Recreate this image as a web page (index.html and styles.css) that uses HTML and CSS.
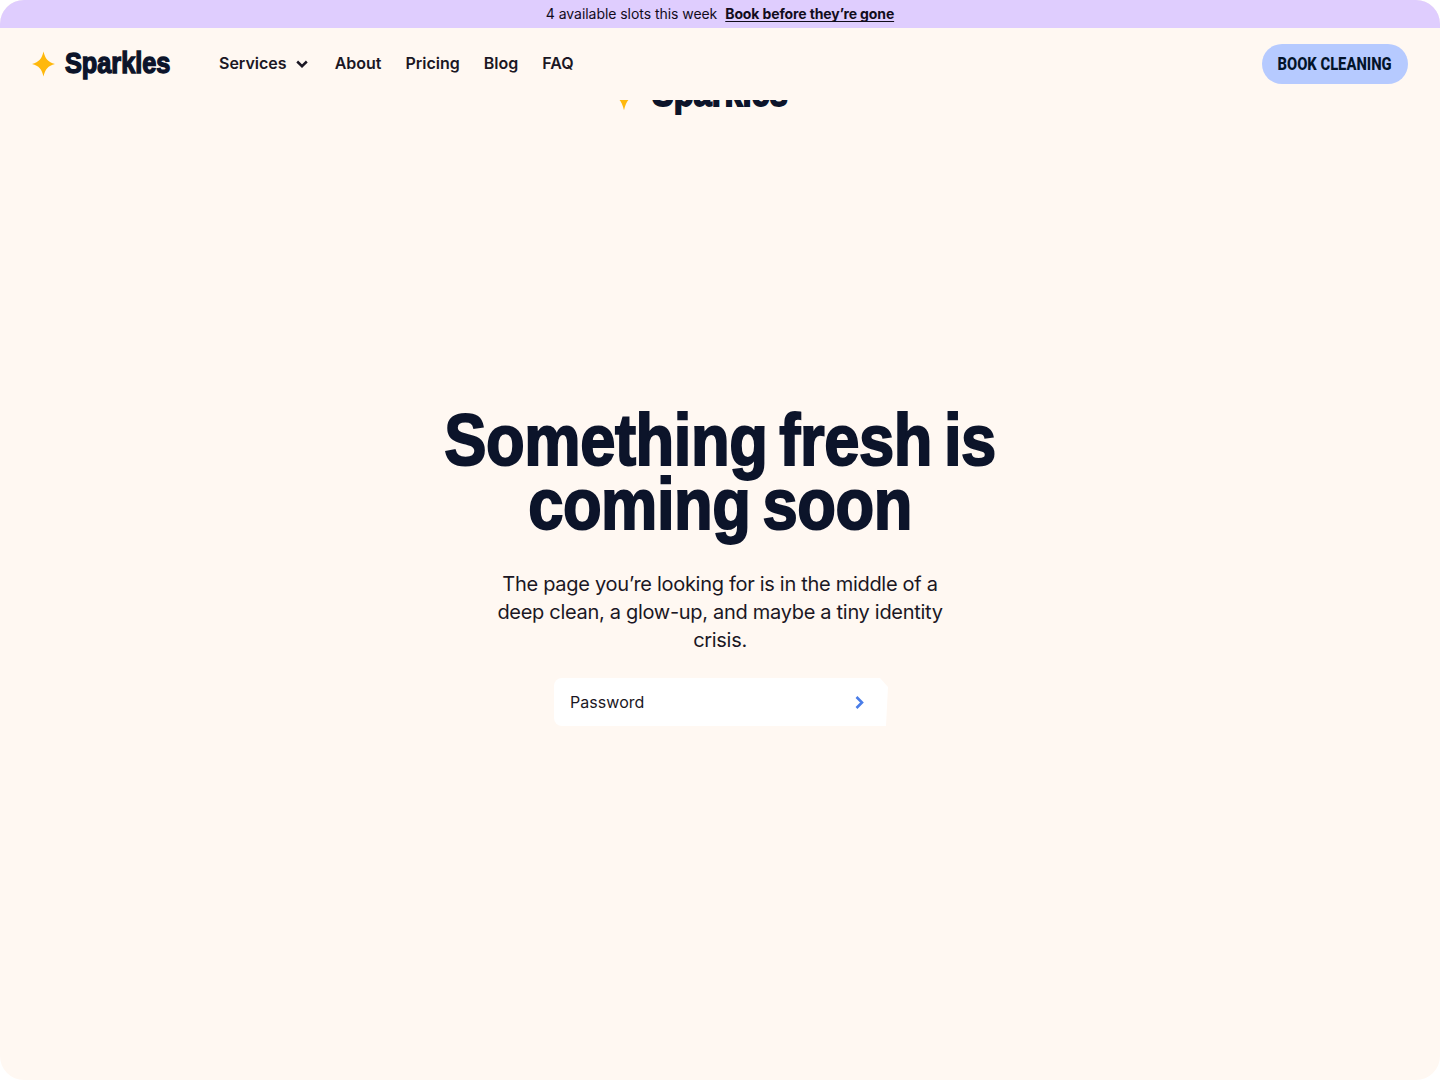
FILE: index.html
```html
<!DOCTYPE html>
<html lang="en">
<head>
    <meta charset="UTF-8">
    <meta name="viewport" content="width=device-width, initial-scale=1.0">
    <title>Sparkles</title>

    <link rel="stylesheet" href="styles.css">
</head>
<body>

    <div class="page">
        <header class="header">
            <div class="banner">
                <span class="banner__text">4 available slots this week</span>
                <a class="banner__link" href="#">Book before they’re gone</a>
            </div>

            <div class="navbar">
                <a class="logo" href="#">
                    <svg class="logo__star" viewBox="0 0 24 26" aria-hidden="true">
                        <path d="M12 0C13.8 7.6 16.6 11 24 13C16.6 15 13.8 18.4 12 26C10.2 18.4 7.4 15 0 13C7.4 11 10.2 7.6 12 0Z" />
                    </svg>
                    <span class="logo__name">Sparkles</span>
                </a>

                <nav class="nav">
                    <a class="nav__services" href="#">
                        <span>Services</span>
                        <svg class="nav__chevron" viewBox="0 0 12 8" aria-hidden="true">
                            <path d="M1.2 1.5L6 6.2L10.8 1.5" />
                        </svg>
                    </a>
                    <a href="#">About</a>
                    <a href="#">Pricing</a>
                    <a href="#">Blog</a>
                    <a href="#">FAQ</a>
                </nav>

                <a class="button" href="#"><span class="button__label">BOOK CLEANING</span></a>
            </div>
        </header>

        <main class="main">
            <div class="logo logo--large">
                <svg class="logo__star" viewBox="0 0 24 26" aria-hidden="true">
                    <path d="M12 0C13.8 7.6 16.6 11 24 13C16.6 15 13.8 18.4 12 26C10.2 18.4 7.4 15 0 13C7.4 11 10.2 7.6 12 0Z" />
                </svg>
                <span class="logo__name">Sparkles</span>
            </div>

            <section class="soon">
                <h1 class="soon__title">Something fresh is<br>coming soon</h1>
                <p class="soon__text">
                    The page you’re looking for is in the middle of a<br>
                    deep clean, a glow-up, and maybe a tiny identity<br>
                    crisis.
                </p>
                <form class="password">
                    <input class="password__input" type="password" placeholder="Password" aria-label="Password">
                    <button class="password__submit" type="button" aria-label="Submit">
                        <svg viewBox="0 0 9 13" aria-hidden="true">
                            <path d="M1.5 1L7 6.5L1.5 12" />
                        </svg>
                    </button>
                </form>
            </section>
        </main>
    </div>

</body>
</html>
```

FILE: styles.css
```css
:root {
    --clr-cream: #fff8f2;
    --clr-lilac: #dfcdfe;
    --clr-blue: #b6caff;
    --clr-navy: #0c142a;
    --clr-ink: #1b1724;
    --clr-star: #ffb80c;
    --ff-body: Inter, "Liberation Sans", sans-serif;
    --ff-display: "Liberation Sans", Arial, sans-serif;
}
* {
    box-sizing: border-box;
    margin: 0;
}
body {
    background: #fff;
    color: var(--clr-ink);
    font-family: var(--ff-body);
}
a {
    color: inherit;
    text-decoration: none;
}
.page {
    height: 100vh;
    overflow: hidden;
    border-radius: 24px;
    background: var(--clr-cream);
}

/* header */
.header {
    position: relative;
    z-index: 1;
    background: var(--clr-cream);
}
.banner {
    display: flex;
    justify-content: center;
    align-items: center;
    gap: 8px;
    height: 28px;
    padding-bottom: 1px;
    background: var(--clr-lilac);
    color: #120c1c;
    font-size: 14px;
    white-space: nowrap;
}
.banner__text {
    letter-spacing: -0.05px;
}
.banner__link {
    font-weight: 700;
    letter-spacing: -0.12px;
    text-decoration: underline;
    text-decoration-thickness: 1px;
    text-underline-offset: 2px;
    text-decoration-skip-ink: none;
}
.navbar {
    display: flex;
    align-items: center;
    height: 72px;
    padding: 0 32px;
}
.logo {
    display: flex;
    align-items: center;
    width: 187px;
    height: 40px;
}
.logo__star {
    flex: none;
    width: 23px;
    height: 26px;
    margin-right: 10px;
    fill: var(--clr-star);
}
/* condensed heavy look: squeeze the bold face, then thicken it */
.logo__name {
    color: var(--clr-navy);
    font-family: var(--ff-display);
    font-size: 29.5px;
    font-weight: 700;
    line-height: 40px;
    -webkit-text-stroke: 1.4px;
    transform: translateY(-1px) scaleX(0.857);
    transform-origin: left;
}
.nav {
    display: flex;
    gap: 24px;
    padding-bottom: 2px;
    font-size: 16px;
    font-weight: 600;
    line-height: 24px;
    white-space: nowrap;
}
.nav__services {
    display: flex;
    align-items: center;
    gap: 9px;
}
.nav__chevron {
    width: 12px;
    height: 8px;
    margin: 2px 3px 0 0;
    fill: none;
    stroke: var(--clr-ink);
    stroke-width: 2.5;
}
.button {
    display: flex;
    justify-content: center;
    align-items: center;
    width: 146px;
    height: 40px;
    margin-left: auto;
    border-radius: 20px;
    background: var(--clr-blue);
    color: #03142a;
}
.button__label {
    font-family: Roboto, var(--ff-display);
    font-size: 18px;
    font-weight: 800;
    white-space: nowrap;
    transform: translateY(-1px) scaleX(0.82);
}

/* coming soon */
.main {
    display: flex;
    flex-direction: column;
    align-items: center;
}
.logo--large {
    width: 222px;
    height: 52px;
    margin-top: -32px;
}
.logo--large .logo__star {
    width: 30px;
    height: 34px;
    margin-right: 13px;
}
.logo--large .logo__name {
    font-size: 38px;
    -webkit-text-stroke-width: 1.8px;
}
.soon {
    display: flex;
    flex-direction: column;
    align-items: center;
    margin-top: 288px;
    text-align: center;
}
.soon__title {
    color: var(--clr-navy);
    font-family: var(--ff-display);
    font-size: 73px;
    font-weight: 700;
    line-height: 64px;
    letter-spacing: -0.5px;
    word-spacing: -6px;
    white-space: nowrap;
    -webkit-text-stroke: 2px;
    transform: scaleX(0.867);
}
.soon__text {
    margin-top: 34px;
    font-size: 20px;
    line-height: 28px;
    letter-spacing: -0.3px;
    white-space: nowrap;
}
.password {
    display: flex;
    align-items: center;
    width: 334px;
    height: 48px;
    margin: 24px 0 0 2px;
    padding: 0 24px 0 16px;
    border-radius: 8px 0 0 8px;
    background: #fff;
    clip-path: polygon(0 0, 326px 0, 334px 9px, 332px 100%, 0 100%);
}
.password__input {
    flex: 1;
    min-width: 0;
    padding: 0 0 1px;
    border: 0;
    outline: 0;
    background: none;
    color: inherit;
    font: 16px/24px var(--ff-body);
    letter-spacing: 0.05px;
}
.password__input::placeholder {
    color: var(--clr-ink);
    opacity: 1;
}
.password__submit {
    display: flex;
    padding: 0;
    border: 0;
    background: none;
}
.password__submit svg {
    width: 9px;
    height: 13px;
    fill: none;
    stroke: #4a7de8;
    stroke-width: 2.6;
}
```
